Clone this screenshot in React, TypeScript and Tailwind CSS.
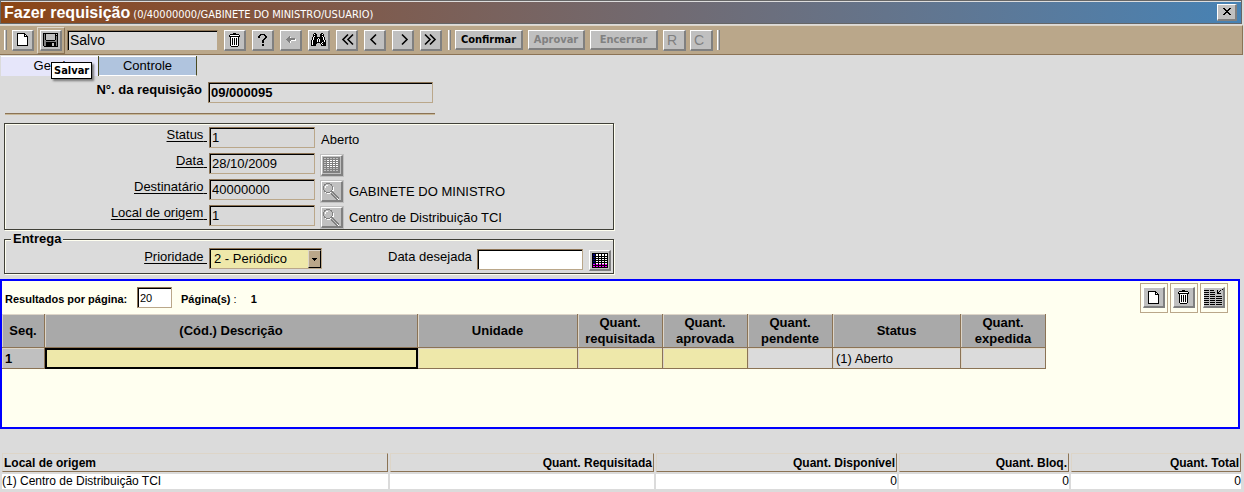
import React from 'react';

const palette: Record<string, string> = {
  '#': '#000000',
  w: '#ffffff',
  g: '#808080',
  s: '#c0c0c0',
  n: '#000080',
  m: '#ff00ff',
};

function Pixels({ rows }: { rows: string[] }) {
  const width = rows[0].length;
  return (
    <svg
      width={width}
      height={rows.length}
      viewBox={`0 0 ${width} ${rows.length}`}
      shapeRendering="crispEdges"
      aria-hidden="true"
      className="shrink-0"
    >
      {rows.flatMap((row, y) =>
        row.split('').map((c, x) =>
          palette[c] ? <rect key={`${x}-${y}`} x={x} y={y} width="1" height="1" fill={palette[c]} /> : null,
        ),
      )}
    </svg>
  );
}

const pageIcon = [
  '########...',
  '#wwwwww##..',
  '#wwwwww#w#.',
  '#wwwwww####',
  '#wwwwwwwww#',
  '#wwwwwwwww#',
  '#wwwwwwwww#',
  '#wwwwwwwww#',
  '#wwwwwwwww#',
  '#wwwwwwwww#',
  '#wwwwwwwww#',
  '#wwwwwwwww#',
  '###########',
];

const diskIcon = [
  '###############',
  '#g#sssssssss#s#',
  '#g#sssssssss###',
  '#g#sssssssss#g#',
  '#g#sssssssss#g#',
  '#g#sssssssss#g#',
  '#g#sssssssss#g#',
  '#gg#########gg#',
  '#ggggggggggggg#',
  '#gg##########g#',
  '#gg######ss##g#',
  '#gg######ss##g#',
  '#gg######ss##g#',
  '.##############',
];

const trashIcon = [
  '....###....',
  '.#########.',
  '#wwwwwwwww#',
  '###########',
  '.#wwwwwww#.',
  '.#w#w#w#w#.',
  '.#w#w#w#w#.',
  '.#w#w#w#w#.',
  '.#w#w#w#w#.',
  '.#w#w#w#w#.',
  '.#w#w#w#w#.',
  '.#w#w#w#w#.',
  '.#wwwwwww#.',
  '..#######..',
];

const helpIcon = [
  '..#####..',
  '.##...##.',
  '##.....##',
  '##.....##',
  '......##.',
  '.....##..',
  '....##...',
  '....##...',
  '....##...',
  '.........',
  '....##...',
  '....##...',
];

const backIcon = [
  '...g......',
  '..ggw.....',
  '.gggggggg.',
  'gggggggggw',
  '.ggggwwwww',
  '..ggw.....',
  '...gw.....',
];

const binocularsIcon = [
  '...##.....##...',
  '..#w##...##w#..',
  '..####...####..',
  '..#w##...##w#..',
  '.#w#########w#.',
  '.#w####w####w#.',
  '.#w###w#w###w#.',
  '#w####w#w####w#',
  '#w####w#w####w#',
  '#w#########w###',
  '#w####...#w####',
  '#w###.....#w###',
  '#####.....#####',
];

const closeIcon = [
  '##....##',
  '.##..##.',
  '..####..',
  '...##...',
  '..####..',
  '.##..##.',
  '##....##',
];

const magnifierIcon = [
  '...gggg..........',
  '.gg....gg........',
  '.g.ww...g........',
  'g.w......g.......',
  'g.w......gw......',
  'g........gw......',
  'g........gw......',
  '.g......gww......',
  '.gg....ggg.......',
  '..wggggw.gg......',
  '....www.g.gg.....',
  '........gg.gg....',
  '.........gg.gg...',
  '..........gg.gg..',
  '...........gg.gg.',
  '............ggwg.',
  '.............ggw.',
];

const calendarDisabled = [
  'ggggggggggggggggg',
  'gssgssgssgssgssgg',
  'ggggggggggggggggg',
  'gssgwwgwwgwwgwwgg',
  'ggggggggggggggggg',
  'gssgwwgwwgwwgwwgg',
  'ggggggggggggggggg',
  'gssgwwgwwgwwgwwgg',
  'ggggggggggggggggg',
  'gssgwwgwwgwwgwwgg',
  'ggggggggggggggggg',
  'gssgssgssgssgssgg',
  'ggggggggggggggggg',
  'gssgssgssgssgssgg',
  'ggggggggggggggggg',
  'ggggggggggggggggg',
];

const calendarEnabled = [
  '################',
  '#nn#ww#ww#ww#ww#',
  '#nn#ww#ww#ww#ww#',
  '################',
  '#nn#ww#ww#ww#ww#',
  '################',
  '#nn#ww#ww#ww#ww#',
  '################',
  '#nn#ww#ww#ww#ww#',
  '################',
  '#nn#ww#ww#ww#ww#',
  '#mm#mm#mm#mm#mm#',
  '################',
  '#mm#mm#mm#mm#mm#',
  '################',
];

const rowsIcon = [
  '..................#',
  '#####.####...#..#..',
  '.............#.#...',
  '#####.#####..##....',
  '.............####..',
  '#####.#####........',
  '...................',
  '#####.#####.######.',
  '...................',
  '#####.#####.######.',
  '...................',
  '#####.#####.######.',
  '...................',
  '#####.#####.######.',
  '...................',
  '#####.#####.######.',
];

function Chevrons({ points }: { points: string[] }) {
  return (
    <svg width="15" height="13" viewBox="0 0 15 13" fill="none" stroke="#000" strokeWidth="1.6" aria-hidden="true" className="shrink-0">
      {points.map((p) => (
        <polyline key={p} points={p} />
      ))}
    </svg>
  );
}

const raised = 'border-t border-l border-r-2 border-b-2 border-t-white border-l-white border-r-[#808080] border-b-[#808080] bg-[#c0c0c0]';
const sunken =
  'h-[21px] border border-t-[#8b7355] border-l-[#8b7355] border-r-[#baa78a] border-b-[#baa78a] px-0.5 shadow-[inset_1px_1px_0_#000] outline-none';

function IconButton({ label, disabled, children }: { label: string; disabled?: boolean; children: React.ReactNode }) {
  return (
    <button type="button" aria-label={label} disabled={disabled} className={`${raised} flex h-[21px] w-[22px] shrink-0 items-center justify-center overflow-hidden`}>
      {children}
    </button>
  );
}

function Grip() {
  return <span className="h-5 w-[3px] shrink-0 border-x border-l-white border-r-[#808080] bg-[#c0c0c0]" />;
}

function Field({ id, label, value, children }: { id: string; label: string; value: string; children?: React.ReactNode }) {
  return (
    <div className="flex h-[25px] items-start">
      <label htmlFor={id} className="w-[202px] text-right leading-[18px] underline underline-offset-2">
        {label}&nbsp;
      </label>
      <input id={id} defaultValue={value} readOnly className={`${sunken} mt-px ml-0.5 w-[106px] bg-[#d9d9d9]`} />
      {children}
    </div>
  );
}

function LookupButton({ label, children }: { label: string; children: React.ReactNode }) {
  return (
    <span className="mt-0.5 ml-[5px] border border-[#c0c0c0]">
      <IconButton label={label} disabled>
        {children}
      </IconButton>
    </span>
  );
}

const columns = [
  { title: 'Seq.', width: 'w-[43px]' },
  { title: '(Cód.) Descrição', width: 'w-[373px]' },
  { title: 'Unidade', width: 'w-[160px]' },
  { title: 'Quant. requisitada', width: 'w-[85px]' },
  { title: 'Quant. aprovada', width: 'w-[85px]' },
  { title: 'Quant. pendente', width: 'w-[85px]' },
  { title: 'Status', width: 'w-[128px]' },
  { title: 'Quant. expedida', width: 'w-[85px]' },
];

const cell = 'border-r border-b border-[#8b7355] pt-px';
const lit = 'shadow-[inset_1px_1px_0_#ddd5c8]';

const stock = [
  { title: 'Local de origem', value: '(1) Centro de Distribuição TCI', width: '', align: 'text-left' },
  { title: 'Quant. Requisitada', value: '', width: 'w-[264px]', align: 'text-right' },
  { title: 'Quant. Disponível', value: '0', width: 'w-[241px]', align: 'text-right' },
  { title: 'Quant. Bloq.', value: '0', width: 'w-[170px]', align: 'text-right' },
  { title: 'Quant. Total', value: '0', width: 'w-[170px]', align: 'text-right' },
];

export default function App() {
  return (
    <main className="min-h-screen bg-[#dbdbdb] font-['Liberation_Sans',Arial,sans-serif] text-[13px] leading-4 text-black">
      <header className="mr-0.5 flex h-6 items-center border border-[#666] bg-linear-to-r from-[#8b4513] to-[#4682b4] pr-1 pl-[3px] text-white shadow-[inset_0_1px_0_#ddd]">
        <h1 className="pt-0.5 text-base font-bold whitespace-nowrap">Fazer requisição</h1>
        <span className="mt-1.5 ml-[3px] font-['DejaVu_Sans_Condensed','DejaVu_Sans',sans-serif] text-[11px] leading-4 whitespace-nowrap">
          (0/40000000/GABINETE DO MINISTRO/USUARIO)
        </span>
        <button type="button" aria-label="Fechar" className={`${raised} ml-auto flex h-[17px] w-5 items-center justify-center`}>
          <Pixels rows={closeIcon} />
        </button>
      </header>

      <div role="toolbar" className="mt-px mr-px flex h-[30px] items-center border-t border-r border-b border-t-[#ddd5c8] border-r-[#8b7355] border-b-[#8b7355] bg-[#baa78a] pl-1">
        <Grip />
        <div className="ml-[5px] flex">
          <IconButton label="Novo">
            <Pixels rows={pageIcon} />
          </IconButton>
        </div>
        <div className="ml-[3px] flex border border-t-[#ddd5c8] border-l-[#ddd5c8] border-r-[#8b7355] border-b-[#8b7355] p-0.5">
          <IconButton label="Salvar">
            <Pixels rows={diskIcon} />
          </IconButton>
        </div>
        <input aria-label="Situação" readOnly defaultValue="Salvo" className={`${sunken} ml-0.5 w-[151px] bg-[#dbdbdb] text-sm`} />
        <div className="ml-1.5 flex gap-1.5">
          <IconButton label="Excluir">
            <Pixels rows={trashIcon} />
          </IconButton>
          <IconButton label="Ajuda">
            <Pixels rows={helpIcon} />
          </IconButton>
          <IconButton label="Voltar" disabled>
            <Pixels rows={backIcon} />
          </IconButton>
          <IconButton label="Localizar">
            <Pixels rows={binocularsIcon} />
          </IconButton>
          <IconButton label="Primeiro">
            <Chevrons points={['9,1.5 4,6.5 9,11.5', '14,1.5 9,6.5 14,11.5']} />
          </IconButton>
          <IconButton label="Anterior">
            <Chevrons points={['9,1.5 4,6.5 9,11.5']} />
          </IconButton>
          <IconButton label="Próximo">
            <Chevrons points={['7,1.5 12,6.5 7,11.5']} />
          </IconButton>
          <IconButton label="Último">
            <Chevrons points={['2,1.5 7,6.5 2,11.5', '7,1.5 12,6.5 7,11.5']} />
          </IconButton>
        </div>
        <div className="ml-1.5 flex">
          <Grip />
        </div>
        <div className="ml-1 flex gap-[5px] font-['DejaVu_Sans_Condensed','DejaVu_Sans',sans-serif] text-[11px] leading-4 font-bold">
          <button type="button" className={`${raised} h-5 w-[68px]`}>Confirmar</button>
          <button type="button" disabled className={`${raised} h-5 w-[57px] text-[#808080]`}>Aprovar</button>
          <button type="button" disabled className={`${raised} h-5 w-[68px] text-[#808080]`}>Encerrar</button>
        </div>
        <div className="ml-[5px] flex gap-1 text-sm leading-4 text-[#808080]">
          <button type="button" disabled className={`${raised} h-[21px] w-[23px] pr-1`}>R</button>
          <button type="button" disabled className={`${raised} h-[21px] w-[23px] pr-1`}>C</button>
        </div>
        <div className="ml-1 flex">
          <Grip />
        </div>
      </div>

      <div className="relative mt-px flex pl-px">
        <div role="tablist" className="flex">
          <button type="button" role="tab" aria-selected="true" className="h-5 w-[98px] border-r border-[#4a4a20] bg-[#e6e6fa] shadow-[inset_0_1px_0_#fff]">Geral</button>
          <button type="button" role="tab" aria-selected="false" className="h-5 w-[98px] border-r border-b border-r-[#4a4a20] border-b-white bg-[#b0c4de] shadow-[inset_0_1px_0_#fff]">Controle</button>
        </div>
        <div role="tooltip" className="absolute top-1.5 left-[51px] border border-black bg-white px-0.5 font-['DejaVu_Sans_Condensed','DejaVu_Sans',sans-serif] text-[11px] leading-[15px] font-bold shadow-[2px_2px_2px_#777]">
          Salvar
        </div>
      </div>

      <form>
        <div className="mt-1.5 flex items-start">
          <label htmlFor="numero" className="w-[202px] text-right font-bold">N°. da requisição</label>
          <input id="numero" readOnly defaultValue="09/000095" className={`${sunken} ml-1.5 w-[225px] bg-[#dbdbdb] font-bold`} />
        </div>
        <hr className="mt-2.5 ml-[5px] h-0.5 w-[430px] border-t border-b border-t-[#8b7355] border-b-[#c8b898]" />

        <fieldset className="mt-2 ml-1 flex w-[610px] flex-col gap-px border border-[#404038] pt-0.5 shadow-[1px_1px_0_#fffff0,inset_1px_1px_0_#fffff0]">
          <Field id="status" label="Status" value="1">
            <span className="mt-[5px] ml-1.5 leading-[18px]">Aberto</span>
          </Field>
          <Field id="data" label="Data" value="28/10/2009">
            <LookupButton label="Escolher data">
              <Pixels rows={calendarDisabled} />
            </LookupButton>
          </Field>
          <Field id="destinatario" label="Destinatário" value="40000000">
            <LookupButton label="Buscar destinatário">
              <Pixels rows={magnifierIcon} />
            </LookupButton>
            <span className="mt-[5px] ml-[5px] leading-[18px]">GABINETE DO MINISTRO</span>
          </Field>
          <Field id="local" label="Local de origem" value="1">
            <LookupButton label="Buscar local de origem">
              <Pixels rows={magnifierIcon} />
            </LookupButton>
            <span className="mt-[5px] ml-[5px] leading-[18px]">Centro de Distribuição TCI</span>
          </Field>
        </fieldset>

        <fieldset className="mt-px ml-1 w-[610px] border border-[#404038] shadow-[1px_1px_0_#fffff0,inset_1px_1px_0_#fffff0]">
          <legend className="ml-1.5 bg-[#dbdbdb] px-0.5 font-bold">Entrega</legend>
          <div className="flex h-[26px] items-start pt-px">
            <label htmlFor="prioridade" className="w-[202px] text-right leading-[18px] underline underline-offset-2">
              Prioridade&nbsp;
            </label>
            <div className="relative ml-0.5">
              <select id="prioridade" defaultValue="2" className={`${sunken} w-[113px] appearance-none bg-[#eee8aa] pl-1`}>
                <option value="2">2 - Periódico</option>
              </select>
              <span className="pointer-events-none absolute top-0.5 right-px flex h-[18px] w-[13px] items-center justify-center border border-t-[#ddd5c8] border-l-[#ddd5c8] border-r-black border-b-black bg-[#baa78a]">
                <Pixels rows={['#####', '.###.', '..#..']} />
              </span>
            </div>
            <label htmlFor="desejada" className="ml-[66px] w-[84px] leading-[18px]">Data desejada</label>
            <input id="desejada" className={`${sunken} mt-px ml-[5px] w-[106px] bg-white`} />
            <span className="mt-0.5 ml-1.5">
              <IconButton label="Escolher data desejada">
                <Pixels rows={calendarEnabled} />
              </IconButton>
            </span>
          </div>
        </fieldset>
      </form>

      <section className="mt-[5px] mr-1 min-h-[150px] border-2 border-[#0000ff] bg-[#fffff0]">
        <div className="flex h-[33px] items-start pr-2.5 pl-[3px] text-[11px]">
          <label htmlFor="porPagina" className="mt-2.5 w-[132px] font-bold whitespace-nowrap">Resultados por página:</label>
          <input id="porPagina" defaultValue="20" className={`${sunken} mt-1.5 w-[35px] bg-white`} />
          <span className="mt-2.5 ml-[9px]"><b>Página(s)</b> :</span>
          <span className="mt-2.5 ml-3.5 font-bold">1</span>
          <div className="mt-0.5 ml-auto flex gap-0.5">
            <span className="border border-[#baa78a] px-0.5 pt-[3px] pb-1">
              <IconButton label="Nova linha">
                <Pixels rows={pageIcon} />
              </IconButton>
            </span>
            <span className="border border-[#baa78a] px-0.5 pt-[3px] pb-1">
              <IconButton label="Excluir linha">
                <Pixels rows={trashIcon} />
              </IconButton>
            </span>
            <span className="border border-[#baa78a] px-0.5 pt-[3px] pb-1">
              <IconButton label="Inserir linhas">
                <Pixels rows={rowsIcon} />
              </IconButton>
            </span>
          </div>
        </div>
        <table className="w-[1044px] table-fixed border-separate border-spacing-0">
          <thead>
            <tr className="h-[34px]">
              {columns.map((c) => (
                <th key={c.title} scope="col" className={`${cell} ${lit} ${c.width} bg-[#a9a9a9] px-0 pb-0 text-center align-middle font-bold`}>
                  {c.title}
                </th>
              ))}
            </tr>
          </thead>
          <tbody>
            <tr className="h-[21px]">
              <th scope="row" className={`${cell} ${lit} bg-[#c0c0c0] pr-0 pb-0 pl-[3px] text-left font-bold`}>1</th>
              <td className="border-2 border-black bg-[#eee8aa] p-0" />
              <td className={`${cell} ${lit} bg-[#eee8aa]`} />
              <td className={`${cell} ${lit} bg-[#eee8aa]`} />
              <td className={`${cell} ${lit} bg-[#eee8aa]`} />
              <td className={`${cell} ${lit} bg-[#dbdbdb]`} />
              <td className={`${cell} ${lit} bg-[#dbdbdb] pr-0 pb-0 pl-[3px]`}>(1) Aberto</td>
              <td className={`${cell} ${lit} bg-[#dbdbdb]`} />
            </tr>
          </tbody>
        </table>
      </section>

      <div className="mt-[22px] mr-px">
        <table className="w-full table-fixed border-separate border-spacing-0.5 text-xs leading-[15px]">
          <thead>
            <tr>
              {stock.map((c) => (
                <th key={c.title} scope="col" className={`${c.width} ${c.align} border border-t-[#ddd5c8] border-l-[#ddd5c8] border-r-[#8b7355] border-b-[#8b7355] px-px pt-0.5 pb-0 font-bold`}>
                  {c.title}
                </th>
              ))}
            </tr>
          </thead>
          <tbody>
            <tr>
              {stock.map((c) => (
                <td key={c.title} className={`${c.align} h-[15px] bg-white p-0`}>{c.value}</td>
              ))}
            </tr>
          </tbody>
        </table>
      </div>
    </main>
  );
}
